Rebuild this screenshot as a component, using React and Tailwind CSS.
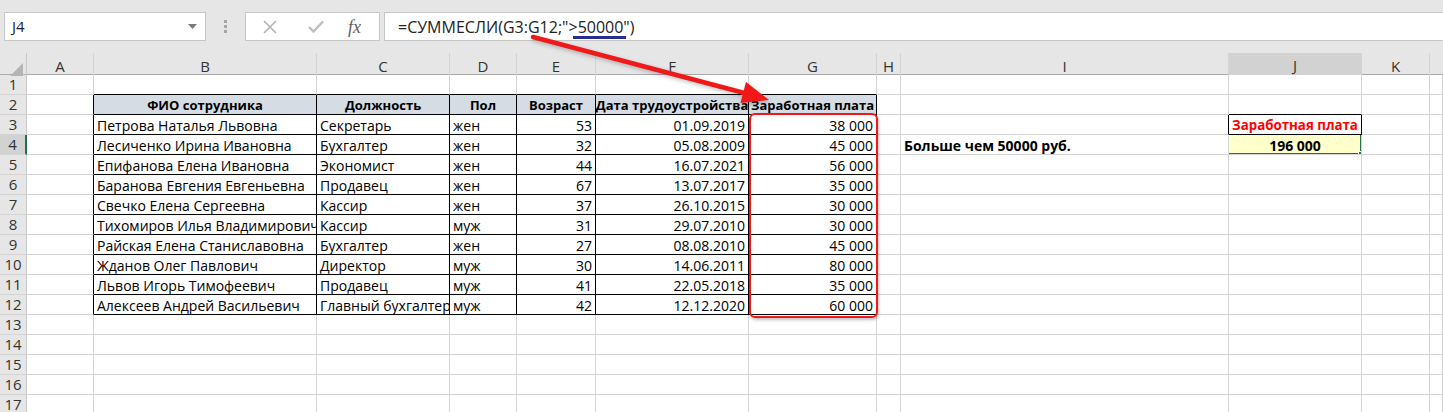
import React from 'react';

const COLS = ['A', 'B', 'C', 'D', 'E', 'F', 'G', 'H', 'I', 'J', 'K', ''];
const GRID = 'grid grid-cols-[27px_67px_223px_133px_67px_79px_153px_128px_24px_328px_133px_68px_1fr]';

const HEAD = ['ФИО сотрудника', 'Должность', 'Пол', 'Возраст', 'Дата трудоустройства', 'Заработная плата'];

const DATA = [
  ['Петрова Наталья Львовна', 'Секретарь', 'жен', '53', '01.09.2019', '38 000'],
  ['Лесиченко Ирина Ивановна', 'Бухгалтер', 'жен', '32', '05.08.2009', '45 000'],
  ['Епифанова Елена Ивановна', 'Экономист', 'жен', '44', '16.07.2021', '56 000'],
  ['Баранова Евгения Евгеньевна', 'Продавец', 'жен', '67', '13.07.2017', '35 000'],
  ['Свечко Елена Сергеевна', 'Кассир', 'жен', '37', '26.10.2015', '30 000'],
  ['Тихомиров Илья Владимирович', 'Кассир', 'муж', '31', '29.07.2010', '30 000'],
  ['Райская Елена Станиславовна', 'Бухгалтер', 'жен', '27', '08.08.2010', '45 000'],
  ['Жданов Олег Павлович', 'Директор', 'муж', '30', '14.06.2011', '80 000'],
  ['Львов Игорь Тимофеевич', 'Продавец', 'муж', '41', '22.05.2018', '35 000'],
  ['Алексеев Андрей Васильевич', 'Главный бухгалтер', 'муж', '42', '12.12.2020', '60 000'],
];

// r: 1..17, c: 1..12 (A..K, extra)
function cellInfo(r, c) {
  const rightBlack = (r >= 2 && r <= 12 && c >= 1 && c <= 7) || (r === 3 && (c === 9 || c === 10));
  const bottomBlack = (r >= 1 && r <= 12 && c >= 2 && c <= 7) || ((r === 2 || r === 3) && c === 10);
  let text = '';
  let kind = 'left';
  if (r === 2 && c >= 2 && c <= 7) {
    text = HEAD[c - 2];
    kind = 'head';
  } else if (r >= 3 && r <= 12 && c >= 2 && c <= 7) {
    text = DATA[r - 3][c - 2];
    kind = c >= 5 ? 'right' : 'left';
  } else if (r === 3 && c === 10) {
    text = 'Заработная плата';
    kind = 'red';
  } else if (r === 4 && c === 9) {
    text = 'Больше чем 50000 руб.';
    kind = 'bold';
  } else if (r === 4 && c === 10) {
    text = '196 000';
    kind = 'total';
  }
  return { rightBlack, bottomBlack, text, kind };
}

function Cell({ r, c }) {
  const { rightBlack, bottomBlack, text, kind } = cellInfo(r, c);
  const br = rightBlack ? 'border-r-black' : 'border-r-[#d4d4d4]';
  const bb = bottomBlack ? 'border-b-black' : 'border-b-[#d4d4d4]';
  let bg = 'bg-white';
  if (kind === 'head') bg = 'bg-[#d6dce4]';
  if (kind === 'total') bg = 'bg-[#ffffcc]';
  let align = 'justify-start pl-[3px]';
  if (kind === 'right') align = 'justify-end pr-[3px]';
  if (kind === 'head' || kind === 'red' || kind === 'total') align = 'justify-center';
  let txt = 'text-black text-[14px]';
  if (kind === 'head') txt = 'text-black font-bold text-[13px]';
  if (kind === 'bold' || kind === 'total') txt = 'text-black font-bold text-[14px]';
  if (kind === 'red') txt = 'text-[#ff0000] font-bold text-[13.3px]';
  const clip = c === 9 ? 'overflow-visible' : 'overflow-hidden';

  return (
    <div className={`relative h-[20px] border-r border-b ${br} ${bb} ${bg} flex items-center ${align} ${clip}`}>
      <span className={`whitespace-nowrap leading-none pt-[2px] ${txt}`}>{text}</span>
      {kind === 'total' && (
        <>
          <div className="absolute -left-[2px] -top-[2px] -right-[1px] -bottom-[1px] border-2 border-[#217346]" />
          <div className="absolute -right-[4px] -bottom-[4px] w-[7px] h-[7px] bg-[#217346] border border-white z-10" />
        </>
      )}
    </div>
  );
}

function FormulaBar() {
  return (
    <div className="h-[53px] bg-[#e6e6e6] flex items-start pt-[12px] pl-[4px]">
      <div className="w-[202px] h-[29px] bg-white border border-[#c6c6c6] flex items-center justify-between pl-[7px] pr-[8px]">
        <span className="text-[15px] text-[#222]">J4</span>
        <svg width="9" height="5" viewBox="0 0 9 5"><path d="M0 0h9L4.5 5z" fill="#7a7a7a" /></svg>
      </div>
      <div className="w-[39px] h-[29px] flex flex-col items-center justify-center gap-[2px]">
        <span className="w-[3px] h-[3px] bg-[#a6a6a6]" />
        <span className="w-[3px] h-[3px] bg-[#a6a6a6]" />
        <span className="w-[3px] h-[3px] bg-[#a6a6a6]" />
      </div>
      <div className="w-[135px] h-[29px] bg-white border border-[#c6c6c6] flex items-center">
        <div className="w-[43px] flex justify-center pl-[4px]">
          <svg width="14" height="14" viewBox="0 0 14 14"><path d="M1 1l12 12M13 1L1 13" stroke="#b4b4b4" strokeWidth="1.6" /></svg>
        </div>
        <div className="w-[45px] flex justify-center pl-[8px]">
          <svg width="16" height="13" viewBox="0 0 16 13"><path d="M1 7l4.5 4.5L15 1.5" stroke="#bdbdbd" strokeWidth="2.4" fill="none" /></svg>
        </div>
        <div className="flex-1 flex justify-center pr-[4px]">
          <span className="font-['Liberation_Serif',serif] italic text-[18px] text-[#5e5e5e] leading-none">fx</span>
        </div>
      </div>
      <div className="ml-[4px] flex-1 h-[29px] bg-white border-y border-l border-[#c6c6c6] flex items-center pl-[13px]">
        <span className="text-[16px] text-[#222] whitespace-nowrap pt-[1px]">
          =СУММЕСЛИ(G3:G12;"&gt;50000")
        </span>
      </div>
    </div>
  );
}

function ColumnHeader() {
  return (
    <div className={`${GRID} h-[22px] bg-[#e6e6e6] border-b border-[#ababab]`}>
      <div className="relative border-r border-[#c8c8c8]">
        <svg className="absolute right-[3px] bottom-[3px]" width="13" height="13" viewBox="0 0 13 13"><path d="M13 0v13H0z" fill="#b4b4b4" /></svg>
      </div>
      {COLS.map((l, i) => {
        const sel = l === 'J';
        return (
          <div
            key={i}
            className={`flex items-center justify-center text-[15px] text-[#333] pt-[1px] ${i < 11 ? 'border-r border-[#d4d4d4]' : ''} ${sel ? 'bg-[#d2d2d2] border-b-2 border-b-[#217346]' : ''}`}
          >
            {l}
          </div>
        );
      })}
    </div>
  );
}

function Row({ r }) {
  const sel = r === 4;
  return (
    <div className={GRID}>
      <div className={`h-[20px] flex items-center justify-center text-[15px] text-[#333] border-b border-[#d4d4d4] ${sel ? 'bg-[#d2d2d2] border-r-2 border-r-[#217346]' : 'bg-[#e6e6e6] border-r border-r-[#c8c8c8]'}`}>
        {r}
      </div>
      {COLS.map((_, i) => <Cell key={i} r={r} c={i + 1} />)}
    </div>
  );
}

function Overlay() {
  return (
    <>
      {/* underline under 50000 */}
      <div className="absolute left-[573px] top-[36px] w-[53px] h-[3px] bg-[#2b2d8c]" />
      {/* red frame around G3:G12 */}
      <div className="absolute left-[749px] top-[113px] w-[129px] h-[205px] border-2 border-[#f01818] rounded-[6px] shadow-[1px_2px_3px_rgba(0,0,0,0.25)]" />
      {/* arrow */}
      <svg className="absolute left-0 top-0 pointer-events-none drop-shadow-[1px_2px_2px_rgba(0,0,0,0.25)]" width="1443" height="412">
        <line x1="533" y1="37" x2="748" y2="94" stroke="#f01818" strokeWidth="4.5" strokeLinecap="round" />
        <polygon points="769,100 740.5,103 746,82" fill="#f01818" />
      </svg>
    </>
  );
}

export default function App() {
  const rows = Array.from({ length: 17 }, (_, i) => i + 1);
  return (
    <div className="relative w-[1443px] h-[412px] overflow-hidden bg-white font-['Open_Sans',sans-serif]">
      <FormulaBar />
      <ColumnHeader />
      {rows.map((r) => <Row key={r} r={r} />)}
      <Overlay />
    </div>
  );
}
